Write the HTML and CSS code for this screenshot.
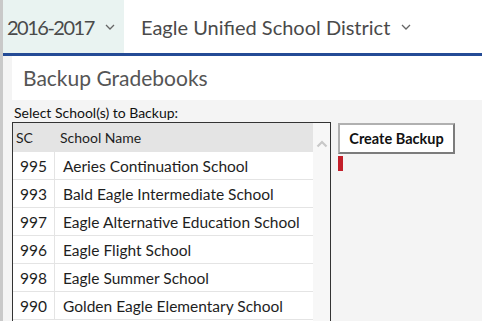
FILE: index.html
```html
<!DOCTYPE html>
<html>
<head>
<meta charset="utf-8">
<link rel="stylesheet" href="styles.css">
</head>
<body>
<div class="app">
  <header class="topbar">
    <div class="tab tab-year">
      <span class="year">2016-2017</span>
      <svg class="chev" width="10" height="6" viewBox="0 0 10 6"><path d="M1 1 L5 5 L9 1" fill="none" stroke="#666" stroke-width="1.3"/></svg>
    </div>
    <div class="tab tab-district">
      <span>Eagle Unified School District</span>
      <svg class="chev" width="10" height="6" viewBox="0 0 10 6"><path d="M1 1 L5 5 L9 1" fill="none" stroke="#666" stroke-width="1.3"/></svg>
    </div>
  </header>
  <div class="rule"></div>
  <main class="content">
    <section class="panel">
      <h1 class="title">Backup Gradebooks</h1>
    </section>
    <div class="label">Select School(s) to Backup:</div>
    <div class="work">
      <div class="grid">
        <div class="grid-main">
          <div class="row head"><div class="c-sc">SC</div><div class="c-name">School Name</div></div>
          <div class="row"><div class="c-sc">995</div><div class="c-name">Aeries Continuation School</div></div>
          <div class="row"><div class="c-sc">993</div><div class="c-name">Bald Eagle Intermediate School</div></div>
          <div class="row"><div class="c-sc">997</div><div class="c-name">Eagle Alternative Education School</div></div>
          <div class="row"><div class="c-sc">996</div><div class="c-name">Eagle Flight School</div></div>
          <div class="row"><div class="c-sc">998</div><div class="c-name">Eagle Summer School</div></div>
          <div class="row"><div class="c-sc">990</div><div class="c-name">Golden Eagle Elementary School</div></div>
        </div>
        <div class="scroll">
          <svg width="12" height="8" viewBox="0 0 12 8"><path d="M1.5 6.5 L6 2 L10.5 6.5" fill="none" stroke="#c8c8c8" stroke-width="2.2"/></svg>
        </div>
      </div>
      <div class="actions">
        <button class="btn">Create Backup</button>
        <div class="flag"></div>
      </div>
    </div>
  </main>
</div>
</body>
</html>
```

FILE: styles.css
```css
html, body {
  margin: 0;
  padding: 0;
  height: 100%;
  overflow: hidden;
}
body {
  background: #f4f4f4;
  font-family: "Lato", "Noto Sans", sans-serif;
  color: #222;
}
.app {
  border-left: 3px solid #c9c9c9;
  min-height: 100%;
  box-sizing: border-box;
}
.topbar {
  display: flex;
  height: 53px;
  background: #fff;
  white-space: nowrap;
}
.tab {
  display: flex;
  align-items: center;
  font-size: 20px;
  color: #4a4a4a;
}
.chev { flex-shrink: 0; }
.tab-year {
  background: #e9f3f1;
  width: 121px;
  flex-shrink: 0;
  padding-left: 4px;
  box-sizing: border-box;
}
.year { letter-spacing: -1.5px; }
.tab-year .chev { margin-left: 11px; }
.tab-district { padding-left: 17px; }
.tab-district .chev { margin-left: 11px; }
.rule {
  height: 3px;
  background: #244b96;
}
.content {
  padding-left: 9px;
}
.panel {
  background: #fff;
  height: 44px;
  display: flex;
  align-items: center;
}
.title {
  margin: 0;
  padding-left: 11px;
  font-weight: normal;
  font-size: 21px;
  color: #555;
  position: relative;
  top: -1px;
}
.label {
  font-size: 14px;
  color: #111;
  padding-left: 2px;
  margin-top: 4px;
  height: 18px;
  line-height: 18px;
}
.work {
  display: flex;
  align-items: flex-start;
}
.grid {
  display: flex;
  border: 1px solid #333;
  border-bottom: none;
  background: #fff;
  width: 319px;
  height: 200px;
  box-sizing: border-box;
}
.grid-main {
  flex: 1;
}
.row {
  display: flex;
  height: 28px;
  box-sizing: border-box;
  align-items: center;
  border-bottom: 1px solid #e4e4e4;
  font-size: 15.5px;
  color: #1e1e1e;
}
.row.head {
  background: #e4e4e4;
  height: 29px;
  border-bottom: none;
  font-size: 14px;
}
.c-sc {
  width: 42px;
  padding-left: 7px;
  box-sizing: border-box;
  align-self: stretch;
  display: flex;
  align-items: center;
  border-right: 1px solid #e4e4e4;
}
.head .c-sc { padding-left: 3px; border-right: none; }
.c-name {
  padding-left: 8px;
}
.head .c-name { padding-left: 5px; }
.scroll {
  width: 17px;
  background: #f7f7f7;
  display: flex;
  justify-content: center;
  padding-top: 17px;
  box-sizing: border-box;
}
.scroll svg { display: block; }
.actions {
  margin-left: 7px;
  padding-top: 1px;
}
.btn {
  display: block;
  width: 117px;
  height: 31px;
  background: #fff;
  border: 2px solid #7c7c7c;
  border-top-color: #b0b0b0;
  border-left-color: #b0b0b0;
  font-family: "Lato", "Noto Sans", sans-serif;
  font-size: 14.5px;
  font-weight: bold;
  color: #111;
  padding: 0;
}
.flag {
  width: 5px;
  height: 15px;
  background: #c31f2a;
  margin-top: 2px;
}
```
